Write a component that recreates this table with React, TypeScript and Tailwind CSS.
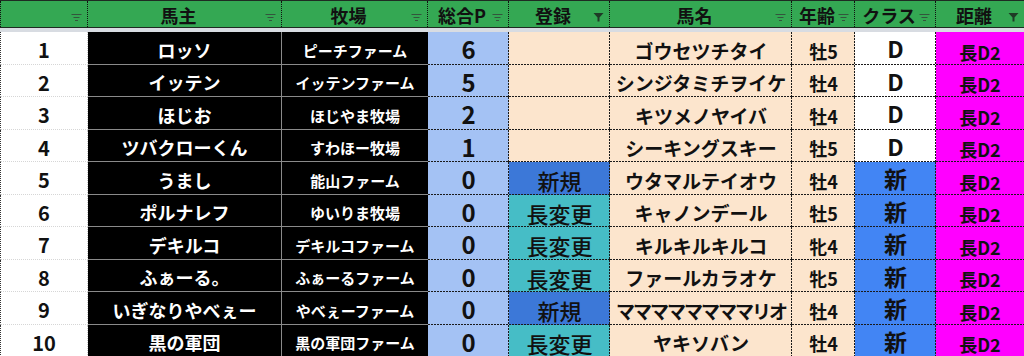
import React from "react";

type Row = {
  n: number;
  owner: string;
  farm: string;
  p: number;
  reg: "" | "新規" | "長変更";
  horse: string;
  age: string;
  cls: "D" | "新";
  dist: string;
};

const rows: Row[] = [
  { n: 1, owner: "ロッソ", farm: "ピーチファーム", p: 6, reg: "", horse: "ゴウセツチタイ", age: "牡5", cls: "D", dist: "長D2" },
  { n: 2, owner: "イッテン", farm: "イッテンファーム", p: 5, reg: "", horse: "シンジタミチヲイケ", age: "牡4", cls: "D", dist: "長D2" },
  { n: 3, owner: "ほじお", farm: "ほじやま牧場", p: 2, reg: "", horse: "キツメノヤイバ", age: "牡4", cls: "D", dist: "長D2" },
  { n: 4, owner: "ツバクローくん", farm: "すわほー牧場", p: 1, reg: "", horse: "シーキングスキー", age: "牡5", cls: "D", dist: "長D2" },
  { n: 5, owner: "うまし", farm: "能山ファーム", p: 0, reg: "新規", horse: "ウタマルテイオウ", age: "牡4", cls: "新", dist: "長D2" },
  { n: 6, owner: "ポルナレフ", farm: "ゆいりま牧場", p: 0, reg: "長変更", horse: "キャノンデール", age: "牡5", cls: "新", dist: "長D2" },
  { n: 7, owner: "デキルコ", farm: "デキルコファーム", p: 0, reg: "長変更", horse: "キルキルキルコ", age: "牝4", cls: "新", dist: "長D2" },
  { n: 8, owner: "ふぁーる。", farm: "ふぁーるファーム", p: 0, reg: "長変更", horse: "ファールカラオケ", age: "牝5", cls: "新", dist: "長D2" },
  { n: 9, owner: "いぎなりやべぇー", farm: "やべぇーファーム", p: 0, reg: "新規", horse: "ママママママママリオ", age: "牡4", cls: "新", dist: "長D2" },
  { n: 10, owner: "黒の軍団", farm: "黒の軍団ファーム", p: 0, reg: "長変更", horse: "ヤキソバン", age: "牡4", cls: "新", dist: "長D2" },
];

const font = { fontFamily: '"Noto Sans CJK JP", "Noto Sans", sans-serif' };

const COLS = "grid-cols-[88px_194px_146px_81px_101px_182px_63px_81px_88px]";

// dotted bottom + right grid lines (2px on, 1px off), drawn as background so they don't take space
const dotBR =
  "bg-no-repeat [background-image:repeating-linear-gradient(90deg,#1a1a1a_0_2px,transparent_2px_3px),repeating-linear-gradient(180deg,#1a1a1a_0_2px,transparent_2px_3px)] [background-size:100%_1px,1px_100%] [background-position:left_bottom,right_top]";
const dotB =
  "bg-no-repeat [background-image:repeating-linear-gradient(90deg,#1a1a1a_0_2px,transparent_2px_3px)] [background-size:100%_1px] [background-position:left_bottom]";

function FilterIcon({ active }: { active?: boolean }) {
  if (active) {
    return (
      <svg width="11" height="10" viewBox="0 0 11 10" className="shrink-0">
        <path d="M0.5 1 H10.5 L6.5 5.5 V9.5 H4.5 V5.5 Z" fill="#1f3a26" />
      </svg>
    );
  }
  return (
    <svg width="11" height="9" viewBox="0 0 11 9" className="shrink-0">
      <rect x="0.5" y="1" width="10" height="1" fill="#33553c" />
      <rect x="2.5" y="4" width="6" height="1" fill="#33553c" />
      <rect x="4" y="7" width="3" height="1" fill="#33553c" />
    </svg>
  );
}

function HeaderCell({ label, active, last }: { label: string; active?: boolean; last?: boolean }) {
  return (
    <div
      className={`flex h-full items-center pl-[4px] pr-[5px] ${
        last ? "" : "border-r border-dotted border-[#111]"
      }`}
    >
      <div className="flex flex-1 justify-center whitespace-nowrap text-[18px] font-bold leading-none text-[#111] pt-[1px]">
        {label}
      </div>
      <div className="flex h-full items-end pb-[5px]">
        <FilterIcon active={active} />
      </div>
    </div>
  );
}

export default function App() {
  return (
    <div className="h-[356px] w-[1024px] overflow-hidden bg-white leading-none" style={font}>
      {/* header */}
      <div className={`grid h-[28px] grid-rows-1 ${COLS} border-t border-b border-[#1e2b22] bg-[#34a853]`}>
        <div className="flex h-full items-end justify-end border-r border-l border-dotted border-[#111] pb-[5px] pr-[5px]">
          <FilterIcon />
        </div>
        <HeaderCell label="馬主" />
        <HeaderCell label="牧場" />
        <HeaderCell label="総合P" />
        <HeaderCell label="登録" active />
        <HeaderCell label="馬名" />
        <HeaderCell label="年齢" />
        <HeaderCell label="クラス" />
        <HeaderCell label="距離" active last />
      </div>
      <div className="h-[4px] bg-[#d8dce2]" />
      {/* body */}
      <div>
        {rows.map((r, i) => {
          const h = i % 2 === 0 ? "h-[33px]" : "h-[32px]";
          const regBg =
            r.reg === "新規" ? "bg-[#3c78d8]" : r.reg === "長変更" ? "bg-[#46bdc6]" : "bg-[#fce5cd]";
          const clsBg = r.cls === "新" ? "bg-[#4285f4]" : "bg-white";
          return (
            <div key={r.n} className={`grid ${h} grid-rows-1 ${COLS}`}>
              <div className="flex items-center justify-center overflow-hidden border-l border-dotted border-l-[#333] border-b border-b-[#d6d6d6] border-r border-r-[#c8c8c8] bg-white pt-[4px] text-[20px] font-bold text-[#111]">
                {r.n}
              </div>
              <div className="flex items-center justify-center overflow-hidden border-b border-r border-[#8a8a8a] bg-black pt-[3px] text-[18px] font-bold text-white">
                {r.owner}
              </div>
              <div className="flex items-center justify-center overflow-hidden border-b border-[#8a8a8a] bg-black pt-[4px] text-[15px] font-bold text-white">
                {r.farm}
              </div>
              <div className={`flex items-center justify-center overflow-hidden bg-[#a4c2f4] pt-[1px] text-[24px] font-bold text-[#111] ${dotBR}`}>
                {r.p}
              </div>
              <div className={`flex items-center justify-center overflow-hidden ${regBg} pt-[3px] text-[22px] font-medium text-[#111] ${dotBR}`}>
                {r.reg}
              </div>
              <div
                className={`flex items-center justify-center overflow-hidden whitespace-nowrap bg-[#fce5cd] pt-[3px] text-[19px] font-bold text-[#111] ${dotBR} ${
                  r.horse.length >= 10 ? "tracking-[-2px]" : ""
                }`}
              >
                {r.horse}
              </div>
              <div className={`flex items-center justify-center overflow-hidden bg-[#fce5cd] pt-[4px] text-[18px] font-bold text-[#111] ${dotBR}`}>
                {r.age}
              </div>
              <div className={`flex items-center justify-center overflow-hidden ${clsBg} text-[23px] font-bold text-[#111] ${dotBR}`}>
                {r.cls}
              </div>
              <div className={`flex items-center justify-center overflow-hidden bg-[#ff00ff] pt-[6px] text-[18px] font-bold text-[#111] ${dotB}`}>
                {r.dist}
              </div>
            </div>
          );
        })}
      </div>
    </div>
  );
}
